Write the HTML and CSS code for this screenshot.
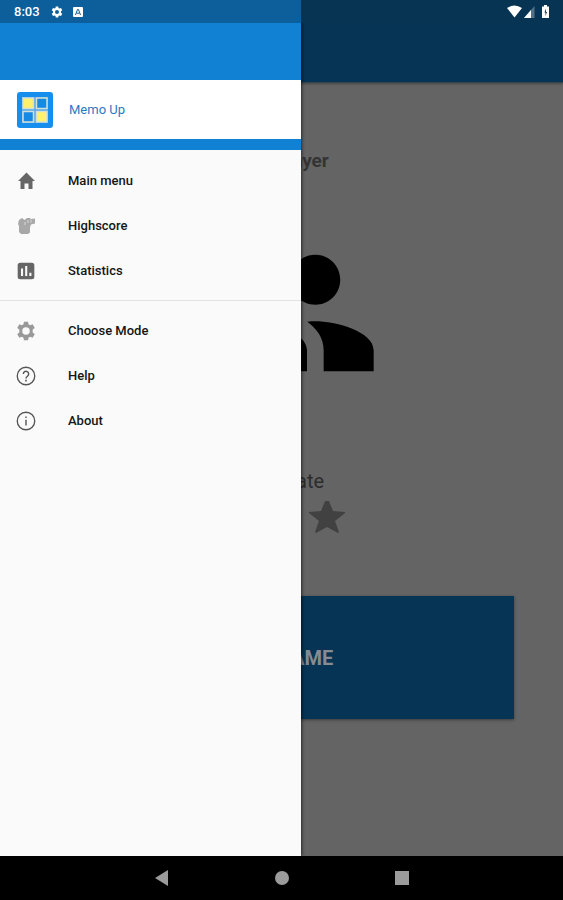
FILE: index.html
```html
<!DOCTYPE html>
<html lang="en">
<head>
<meta charset="utf-8">
<meta name="viewport" content="width=device-width, initial-scale=1">
<title>Memo Up</title>
<link rel="stylesheet" href="styles.css">
</head>
<body>
<div class="screen">
  <main class="page">
    <div class="app-bar"></div>
    <div class="content">
      <h1 class="mode">Two Player</h1>
      <svg class="people" viewBox="0 0 24 24" aria-hidden="true"><path d="M16 11c1.66 0 2.99-1.34 2.99-3S17.66 5 16 5s-3 1.34-3 3 1.34 3 3 3zm-8 0c1.66 0 2.99-1.34 2.99-3S9.66 5 8 5 5 6.34 5 8s1.34 3 3 3zm0 2c-2.33 0-7 1.17-7 3.5V19h14v-2.5c0-2.33-4.67-3.5-7-3.5zm8 0c-.29 0-.62.02-.97.05 1.16.84 1.97 1.97 1.97 3.45V19h6v-2.5c0-2.33-4.67-3.5-7-3.5z"/></svg>
      <p class="level">Moderate</p>
      <div class="stars">
        <svg viewBox="0 0 36 34" aria-hidden="true"><path d="M16 1h4l4 10 12 1v1l-10 8 4 11-1 1-11-6-11 6-1-1 4-11L0 13v-1l12-1z"/></svg>
        <svg viewBox="0 0 36 34" aria-hidden="true"><path d="M16 1h4l4 10 12 1v1l-10 8 4 11-1 1-11-6-11 6-1-1 4-11L0 13v-1l12-1z"/></svg>
        <svg viewBox="0 0 36 34" aria-hidden="true"><path d="M16 1h4l4 10 12 1v1l-10 8 4 11-1 1-11-6-11 6-1-1 4-11L0 13v-1l12-1z"/></svg>
      </div>
      <button class="new-game" type="button">NEW GAME</button>
    </div>
  </main>

  <aside class="drawer">
    <div class="drawer-top"></div>
    <div class="brand">
      <svg class="logo" viewBox="0 0 36 36" aria-hidden="true">
        <rect width="36" height="36" rx="3" fill="#168eee"/>
        <rect x="5" y="5" width="26" height="26" fill="#55a8e8"/>
        <g stroke="#d3e0d8" stroke-width="1.5">
          <rect x="6" y="6" width="10.5" height="10.5" fill="#fff16c"/>
          <rect x="19.5" y="6" width="10.5" height="10.5" fill="#1689e4"/>
          <rect x="6" y="19.5" width="10.5" height="10.5" fill="#1689e4"/>
          <rect x="19.5" y="19.5" width="10.5" height="10.5" fill="#fff16c"/>
        </g>
      </svg>
      <span>Memo Up</span>
    </div>
    <div class="stripe"></div>
    <nav class="menu">
      <a href="#main"><svg viewBox="0 0 20 20" fill="#666" aria-hidden="true"><path d="M10.500 1.500L19 10h-2.500v8H12.500v-5.500h-4V18H4.500v-8H2z"/></svg>Main menu</a>
      <a href="#highscore"><svg viewBox="0 0 20 20" fill="#a8a8a8" aria-hidden="true"><path d="M3 4l3-2 2.500 2L11 2h3l1 1 4-.500V7.500l-4 1-1 3v5L12 18H5l-2-2V10L2 8z"/><path d="M12 4v3M9 6v3M15 3.500v3" stroke="#e2e2e2" stroke-width=".8"/></svg>Highscore</a>
      <a href="#statistics"><svg viewBox="0 0 24 24" fill="#666" aria-hidden="true"><path d="M5 2h14a3 3 0 0 1 3 3v14a3 3 0 0 1-3 3H5a3 3 0 0 1-3-3V5a3 3 0 0 1 3-3zM6 9v9h2.5V9zm5-3v12h2.500V6zm5 8v4h2.500v-4z"/></svg>Statistics</a>
      <hr>
      <a href="#mode"><svg viewBox="0 0 24 24" fill="#999" fill-rule="evenodd" aria-hidden="true"><path d="M9.5 1h5l.5 3 2 1.200 3-1.200 2.500 4.300-2.500 2v3.400l2.500 2L20 20l-3-1.200L15 20l-.5 3h-5L9 20l-2-1.200L4 20l-2.500-4.300 2.500-2v-3.400l-2.500-2L4 4l3 1.200L9 4zM12 7.500a4.500 4.500 0 1 0 0 9 4.500 4.500 0 0 0 0-9z"/></svg>Choose Mode</a>
      <a href="#help"><svg viewBox="0 0 24 24" fill="none" stroke="#555" aria-hidden="true"><circle cx="12" cy="12" r="10.500" stroke-width="1.600"/><path d="M8.800 9.500a3.200 3.200 0 1 1 5.200 2.500c-1.300 1-2 1.600-2 3" stroke-width="1.700"/><path d="M12 16.500v2" stroke-width="1.900"/></svg>Help</a>
      <a href="#about"><svg viewBox="0 0 24 24" fill="none" stroke="#555" aria-hidden="true"><circle cx="12" cy="12" r="10.500" stroke-width="1.600"/><path d="M12 10.500v7M12 6.500v2" stroke-width="1.700"/></svg>About</a>
    </nav>
  </aside>

  <header class="status">
    <span>8:03</span>
    <svg class="small" viewBox="0 0 24 24" fill="#fff" fill-rule="evenodd" aria-hidden="true"><path d="M9.5 1h5l.5 3 2 1.200 3-1.200 2.500 4.300-2.500 2v3.400l2.500 2L20 20l-3-1.200L15 20l-.5 3h-5L9 20l-2-1.200L4 20l-2.500-4.300 2.500-2v-3.400l-2.500-2L4 4l3 1.200L9 4zM12 8a4 4 0 1 0 0 8 4 4 0 0 0 0-8z"/></svg>
    <svg class="small" viewBox="0 0 12 12" aria-hidden="true"><rect x="1" y="1" width="10" height="10" rx="1" fill="#fff"/><path d="M3.500 9l2-5.500h1l2 5.500M4.500 7.200h3" fill="none" stroke="#0d5f9c"/></svg>
    <svg class="signals" viewBox="0 0 46 16" fill="#fff" aria-hidden="true"><path d="M0 4Q7.500-1 15 4L7.500 13.500z"/><path d="M27.500 2v12H17z" fill="#527086"/><path d="M24 6v8h-7z"/><path d="M35 2.500h2V1h3v1.500h2V14h-7z"/><path d="M39 4.500l-1.500 4h1V12l1.500-4h-1z" fill="#073452"/></svg>
  </header>

  <footer class="nav-bar">
    <button type="button" aria-label="Back"><svg viewBox="0 0 16 16"><path d="M1 8l13-8v16z"/></svg></button>
    <button type="button" aria-label="Home"><svg viewBox="0 0 16 16"><circle cx="8" cy="8" r="7"/></svg></button>
    <button type="button" aria-label="Recent apps"><svg viewBox="0 0 16 16"><path d="M1 1h14v14H1z"/></svg></button>
  </footer>
</div>
</body>
</html>
```
FILE: styles.css
```css
* { box-sizing: border-box; }

body {
  margin: 0;
  font-family: Roboto, "Liberation Sans", sans-serif;
}

.screen {
  display: grid;
  grid-template-columns: 301px minmax(0, 1fr);
  grid-template-rows: 1fr 44px;
  min-height: 100vh;
  background: #000;
}

.page {
  grid-column: 1 / -1;
  grid-row: 1;
  background: #646464;
}

.app-bar {
  height: 83px;
  background: #063454;
  border-bottom: 1px solid #35454f;
  box-shadow: 0 1px 2px #444;
}

.content {
  display: flex;
  flex-direction: column;
  align-items: center;
  padding: 66px 49px 0;
}

.mode {
  margin: 0;
  font-size: 19px;
  line-height: 24px;
  font-weight: 700;
  color: #343434;
}

.people {
  width: 200px;
  height: 200px;
  margin: 40px 0 56px;
}

.level {
  margin: 0;
  font-size: 20px;
  line-height: 24px;
  color: #2c2c2c;
}

.stars {
  display: flex;
  gap: 9px;
  margin: 7px 0 62px;
}

.stars svg {
  width: 36px;
  height: 34px;
  fill: #414141;
}

.new-game {
  width: 100%;
  height: 123px;
  border: 0;
  background: #063454;
  color: #858b90;
  box-shadow: 0 1px 3px #3c3c3c;
  font: 700 20px/24px Roboto, "Liberation Sans", sans-serif;
}

.drawer {
  grid-column: 1;
  grid-row: 1;
  background: #fafafa;
  box-shadow: 1px 0 3px rgba(0, 0, 0, 0.6);
  z-index: 1;
}

.drawer-top {
  height: 80px;
  background: #1182d3;
}

.brand {
  display: flex;
  align-items: center;
  gap: 16px;
  height: 59px;
  padding-left: 17px;
  background: #fff;
  color: #2b79c5;
  font-size: 13px;
}

.logo {
  width: 36px;
  height: 36px;
}

.stripe {
  height: 11px;
  background: #1182d3;
}

.menu { padding-top: 8px; }

.menu a {
  display: flex;
  align-items: center;
  gap: 32px;
  height: 45px;
  padding-left: 16px;
  color: #151515;
  font-size: 13px;
  font-weight: 500;
  text-decoration: none;
}

.menu svg {
  width: 20px;
  height: 20px;
}

.menu hr {
  height: 1px;
  margin: 7px 0;
  border: 0;
  background: #e3e3e3;
}

.status {
  grid-column: 1 / -1;
  grid-row: 1;
  align-self: start;
  z-index: 2;
  display: flex;
  align-items: center;
  gap: 9px;
  height: 23px;
  padding: 0 10px 0 14px;
  background: linear-gradient(to right, #0d5f9c 301px, #073452 301px);
  color: #fff;
  font-size: 13px;
  font-weight: 500;
}

.small {
  width: 12px;
  height: 12px;
}

.status span { margin-right: 2px; }

.signals {
  width: 46px;
  height: 16px;
  margin-left: auto;
}

.nav-bar {
  grid-column: 1 / -1;
  grid-row: 2;
  z-index: 2;
  display: flex;
  align-items: center;
  justify-content: center;
  gap: 104px;
  background: #000;
}

.nav-bar button {
  display: flex;
  padding: 0;
  border: 0;
  background: none;
}

.nav-bar svg {
  width: 16px;
  height: 16px;
  fill: #9b9b9b;
}
```
